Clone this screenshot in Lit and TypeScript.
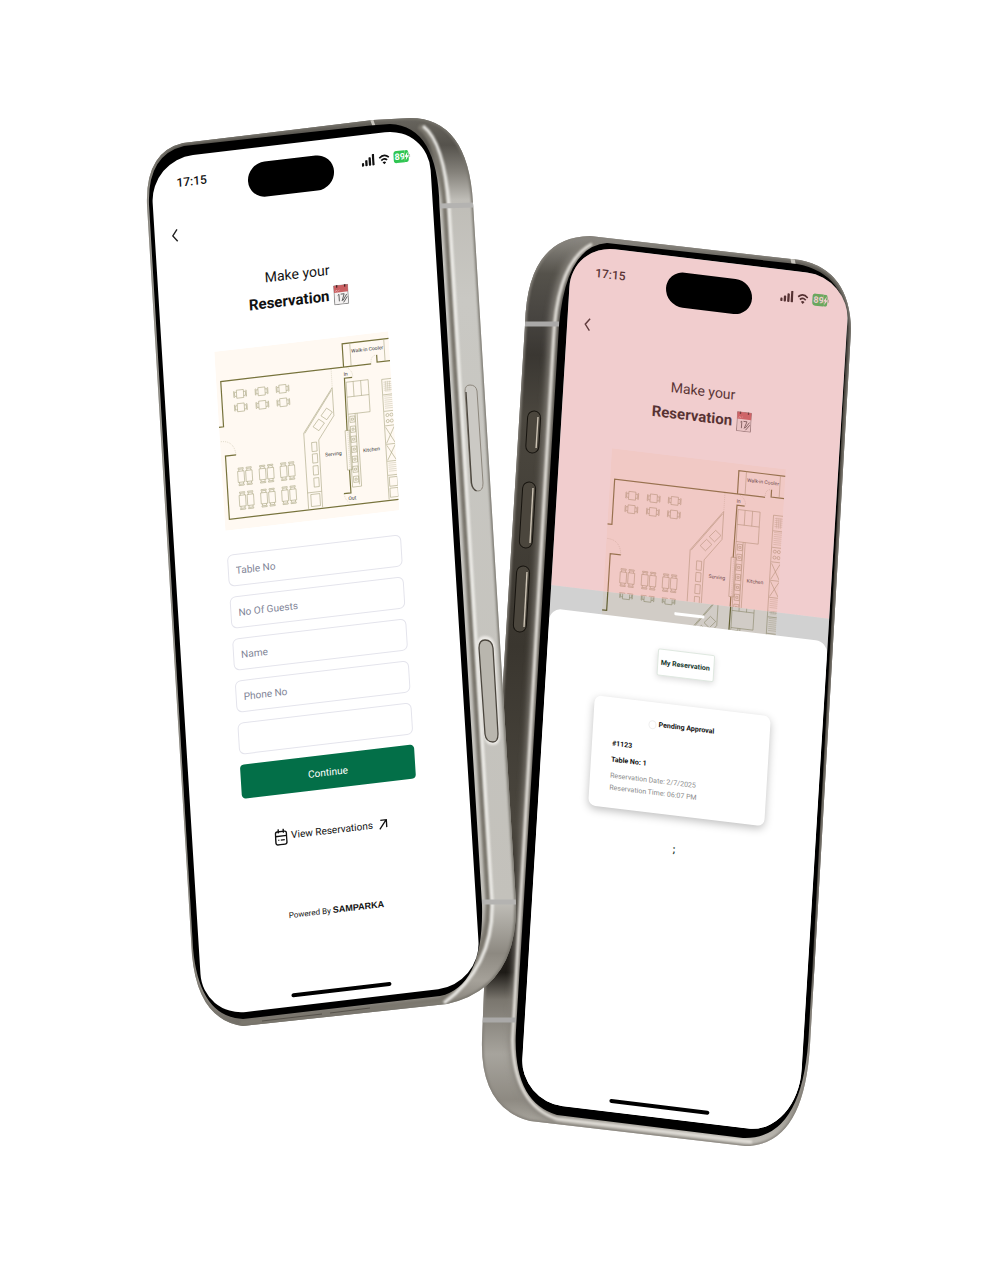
import { LitElement, html, svg, css, nothing } from "lit";
import { customElement, property } from "lit/decorators.js";

/** Restaurant floor plan, drawn on a 174 x 179 grid. */
@customElement("floor-plan")
class FloorPlan extends LitElement {
  /** Which room names to print: "all", "upper" or "none". */
  @property() labels = "all";

  static styles = css`
    :host { display: block; }
    .plan { display: block; width: 100%; height: auto; }
    .ground { fill: #fff9f2; }
    .wall { fill: none; stroke: #77733c; stroke-width: 1.2; }
    .thin { fill: none; stroke: #aaa683; stroke-width: 0.6; }
    .dotted { fill: none; stroke: #b5b195; stroke-width: 0.4; stroke-dasharray: 1 1; }
    .grate { fill: none; stroke: #bcb89c; stroke-width: 0.4; }
    .label { font: 5px "Roboto", sans-serif; fill: #333; text-anchor: middle; }
  `;

  private smallTable(x: number, y: number) {
    return svg`<g class="thin">
      <rect x=${x - 3.5} y=${y - 4} width="7" height="8"></rect>
      <path d="M${x - 3.5} ${y - 2}h-2v4h2M${x - 5.5} ${y - 3}h-.8v6h.8M${x + 3.5} ${y - 2}h2v4h-2M${x + 5.5} ${y - 3}h.8v6h-.8"></path>
    </g>`;
  }

  private longTable(x: number, y: number) {
    return svg`<g class="thin">
      <rect x=${x - 3.2} y=${y - 5.5} width="6.4" height="11"></rect>
      <path d="M${x - 2} ${y - 5.5}v-2h4v2M${x - 2.6} ${y - 7.5}v-1.2h5.2v1.2M${x - 2} ${y + 5.5}v2h4v-2M${x - 2.6} ${y + 7.5}v1.2h5.2v-1.2"></path>
    </g>`;
  }

  render() {
    const cols = [23, 44.5, 65.5];
    return html`<svg class="plan" viewBox="0 0 174 179" role="img" aria-label="Floor plan">
      <rect class="ground" width="174" height="179"></rect>
      <path class="wall" d="M0 75.5h4.6V30.3H155M127.4 30V7H174M161 22v7.3h13M15.3 104.8H4.7V168H174M135.3 41.4h-7.7L127 94M127 133v23h-7"></path>
      <path class="dotted" d="M1 90Q14 90 15.3 104.8M114.9 31v18M155 29Q155 22 161 22M130 31q6 3 6 10M120 156q1 7 5 9"></path>
      <path class="thin" d="M135 7v23M169 7v22M114.8 49.3V77.3L98.3 99.7 98 167M84 167L83.8 91.3 114.8 49.3M84.8 91.6L113.8 52"></path>
      <path class="thin" d="M84 151h14M87 153h9v12h-9z"></path>
      <path class="thin" d="M108 69l5.5 4.5-6 7-5.5-4.5zM99.5 79l5.5 4.5-6 7-5.5-4.5z"></path>
      ${[101.5, 113, 125, 137].map((y) => svg`<rect class="thin" x="91" y=${y} width="5" height="9"></rect>`)}
      <path class="thin" d="M129 45.6h22v32h-22zM129 60.5h22M136 45.6v15M143.5 45.6v15M129 77.5v73h9v-73M136 77.5v71"></path>
      ${[80, 90, 100, 110, 120, 130, 140].map((y) => svg`<path class="thin" d="M130.5 ${y}h5v6h-5zM132 ${y + 2}h2v2h-2z"></path>`)}
      <rect class="thin" x="125" y="93.6" width="5" height="39.4"></rect>
      <path class="dotted" d="M127.5 95v37"></path>
      <path class="thin" d="M174 47h-9.5v120M165 62.5h9M165 79h9M165 93.5h9M165 112h9M165 129h9M165 143h9"></path>
      <path class="grate" d="M166 50h8M166 52h8M166 54h8M166 56h8M166 58h8M168 49v11M170 49v11M172 49v11M166 64h8M166 66h8M166 68h8M166 70h8M166 72h8M166 74h8M166 76h8M166 131h8M166 133h8M166 135h8M166 137h8M166 139h8"></path>
      <path class="thin" d="M165.5 95l8.5 16M174 95l-8.5 16M165.5 113l8.5 15M174 113l-8.5 15M166 145h8v9h-8zM166 156h8v9h-8z"></path>
      ${[[168, 83], [172, 83], [168, 89], [172, 89]].map(([x, y]) => svg`<circle class="thin" cx=${x} cy=${y} r="1.5"></circle>`)}
      ${cols.map((x) => [this.smallTable(x, 44.7), this.smallTable(x, 58.2)])}
      ${cols.map((x) => [127, 151].map((y) => [this.longTable(x - 4, y), this.longTable(x + 4, y)]))}
      ${this.labels === "none" ? nothing : svg`
        <text class="label" x="152" y="17">Walk-in Cooler</text>
        <text class="label" x="129" y="39">In</text>
        <text class="label" x="112" y="117">Serving</text>
        <text class="label" x="150" y="117">Kitchen</text>`}
      ${this.labels === "all" ? svg`<text class="label" x="128" y="163">Out</text>` : nothing}
    </svg>`;
  }
}

/** Clock, signal, Wi-Fi and battery. */
@customElement("status-bar")
class StatusBar extends LitElement {
  static styles = css`
    :host { display: grid; grid-template-columns: 80px 1fr 80px; align-items: center; height: 52px; }
    .time { font: 500 12px/20px "Roboto", sans-serif; text-align: center; color: #111; }
    .icons { display: flex; align-items: center; gap: 4px; grid-column: 3; padding-left: 12px; }
    .icon { display: block; }
    .battery { display: flex; align-items: center; }
    .level { background: #30c552; color: #fff; border-radius: 3px 0 0 3px; padding-left: 1px; font: 700 9px/12px "Roboto", sans-serif; }
  `;
  render() {
    return html`<span class="time">17:15</span>
      <span class="icons">
        <svg class="icon" width="13" height="12" viewBox="0 0 13 12" fill="#111"><rect y="8" width="2.3" height="3.5" rx=".8"></rect><rect x="3.5" y="5.5" width="2.3" height="6" rx=".8"></rect><rect x="7" y="3" width="2.3" height="8.500" rx=".8"></rect><rect x="10.500" y="0" width="2.300" height="11.500" rx=".8"></rect></svg>
        <svg class="icon" width="11" height="11" viewBox="0 0 11 11" fill="none" stroke="#111" stroke-width="1.700"><path d="M.7 4.200Q5.500-.6 10.300 4.200M2.600 6.700Q5.500 3.800 8.400 6.700"></path><path d="M5.500 10.800L3.700 8.800Q5.500 7.200 7.300 8.800z" fill="#111" stroke="none"></path></svg>
        <span class="battery"><span class="level">89</span><svg class="icon" width="6" height="12" viewBox="0 0 6 12"><path d="M-1 0h3Q4 0 4 3v6q0 3-2 3H-1z" fill="#30c552"></path><path d="M3.200 1.500L-.2 6.800H1.600L.8 10.500 4.300 5.300H2.400z" fill="#fff"></path><path d="M5 4.500v3" stroke="#bbb"></path></svg></span>
      </span>`;
  }
}

/** Back button and page title shared by both screens. */
@customElement("screen-header")
class ScreenHeader extends LitElement {
  static styles = css`
    :host { display: block; color: #111; font-family: "Roboto", sans-serif; }
    .back { display: grid; place-items: center; width: 40px; height: 40px; margin-top: 6px; padding: 0; border: 0; background: none; }
    .title { margin: 19px 0 29px; text-align: center; font-size: 14px; line-height: 26px; font-weight: 400; }
    .strong { display: flex; justify-content: center; align-items: center; gap: 4px; font-size: 15px; font-weight: 700; }
  `;
  render() {
    return html`<status-bar></status-bar>
      <button class="back" aria-label="Back"><svg width="8" height="14" viewBox="0 0 8 14" fill="none" stroke="#222" stroke-width="1.400"><path d="M6.500 1L2 7l4.500 6"></path></svg></button>
      <h1 class="title">Make your
        <span class="strong">Reservation
          <svg width="15" height="20" viewBox="0 0 15 20"><rect x=".5" y=".5" width="14" height="19" fill="#f4f2f2" stroke="#777" stroke-width=".8"></rect><path d="M.5.500h14v7H.5z" fill="#c95f62"></path><path d="M3.500 0v2.500M11.500 0v2.500" stroke="#422" stroke-width="1.300"></path><path d="M2 6.500l1-1.500 1 1.500M5 6l1-1" stroke="#f2c6c6" stroke-width=".6" fill="none"></path><path d="M4 10.500l1.300-1v7M7 9.500h3.500l-2.500 7M9 16l4-6M13.500 12.500L9.500 18" fill="none" stroke="#555" stroke-width=".9"></path></svg>
        </span>
      </h1>`;
  }
}

/** Metal body and black bezel of a handset. */
@customElement("phone-body")
class PhoneBody extends LitElement {
  @property() side = "right";
  static styles = css`
    :host { display: block; }
    .body { display: block; width: 100%; height: 100%; overflow: visible; }
    .soft { filter: blur(1px); }
    .blend { filter: blur(3px); }
  `;

  private light() {
    return svg`<defs>
        <linearGradient id="metal" x1="0" y1="118" x2="0" y2="1026" gradientUnits="userSpaceOnUse">
          <stop offset="0" stop-color="#68655e"></stop><stop offset=".03" stop-color="#55524c"></stop>
          <stop offset=".06" stop-color="#85827b"></stop><stop offset=".09" stop-color="#bfbdb7"></stop>
          <stop offset=".2" stop-color="#c9c8c3"></stop><stop offset=".86" stop-color="#c3c1bb"></stop>
          <stop offset=".92" stop-color="#8d8981"></stop><stop offset=".95" stop-color="#a5a199"></stop><stop offset="1" stop-color="#6d6962"></stop>
        </linearGradient>
        <clipPath id="edge"><path d=${LIGHT_BODY}></path></clipPath>
      </defs>
      <path d=${LIGHT_BODY} fill="url(#metal)"></path>
      <g clip-path="url(#edge)" fill="none">
        <path class="soft" d=${LIGHT_BODY} stroke="#77746c" stroke-width="3"></path>
        <path class="soft" d="M419 126Q440 142 445 207L488 900Q491 960 440 1000L240 1023" stroke="#7b776e" stroke-width="5"></path>
        <path class="soft" d="M423 126Q444 142 449 207L492 900Q495 965 444 1003" stroke="#efeeea" stroke-width="3"></path>
        <path d="M440 206l34-1M482 902l36 0" stroke="#b4b3b1" stroke-width="5"></path>
        <path d="M371 118l3 8" stroke="#c8c5be" stroke-width="3"></path>
        <path d="M262 1021l60-7M330 1013l40-5" stroke="#55514a" stroke-width="1"></path>
      </g>
      <path d="M465 391q0-6 5-6 6 0 7 6l6 92q0 8-5 8-6 0-7-8z" fill="#cbc9c4" stroke="#8d877d" stroke-width="1"></path>
      <path d="M466 392l5.500 91q1 6 5 8" stroke="#4b463e" stroke-width="1.300" fill="none"></path>
      <path class="soft" d="M477 645q0-9 8-9t10 9l5 90q0 10-7 10-8 0-9-10z" fill="#eceae6"></path>
      <path d="M479 648q0-8 6-8 7 0 8 8l5 86q0 8-5 8-7 0-8-8z" fill="#b9b6ae" stroke="#4b463e" stroke-width="1.300"></path>
      <path d="M149 205Q147 155 184 146L370 125.500 390 124Q438 126 439.500 207L482 905Q484 986 440 996L243 1019Q199 1017 193 948z" fill="#000"></path>`;
  }

  private dark() {
    return svg`<defs>
        <linearGradient id="metal" x1="0" y1="237" x2="0" y2="1145" gradientUnits="userSpaceOnUse">
          <stop offset="0" stop-color="#8d8a84"></stop><stop offset=".04" stop-color="#55524b"></stop>
          <stop offset=".09" stop-color="#474440"></stop><stop offset=".13" stop-color="#3a3732"></stop><stop offset=".2" stop-color="#4b473f"></stop>
          <stop offset=".45" stop-color="#3a362f"></stop><stop offset=".65" stop-color="#4a463e"></stop>
          <stop offset=".81" stop-color="#1e1b17"></stop><stop offset=".84" stop-color="#7a766e"></stop>
          <stop offset=".9" stop-color="#a7a49d"></stop><stop offset=".95" stop-color="#8e8a82"></stop><stop offset="1" stop-color="#c3c0b9"></stop>
        </linearGradient>
        <clipPath id="edge"><path d=${DARK_BODY}></path></clipPath>
      </defs>
      <path d=${DARK_BODY} fill="url(#metal)"></path>
      <g clip-path="url(#edge)" fill="none">
        <path class="soft" d=${DARK_BODY} stroke="#85817a" stroke-width="3"></path>
        <path class="blend" d="M598 242Q556 254 553 340L514 1040Q516 1105 557 1118" stroke="#85817a" stroke-width="9"></path>
        <path class="soft" d="M592 244Q557 262 553.500 340L512.500 1040Q514 1105 557 1119L752 1142" stroke="#e4e1db" stroke-width="3"></path>
        <path d="M524 324h35M482 1020h34" stroke="#aaa9a8" stroke-width="5"></path>
        <path d="M792 256l2 10" stroke="#c8c5be" stroke-width="4"></path>
      </g>
      ${[[534, 411, 42], [529, 482, 66], [523, 566, 66]].map(
        ([x, y, h]) => svg`<rect x=${x - 6} y=${y} width="13" height=${h} rx="6.500" transform="rotate(3.500 ${x} ${y})" fill="#4b463d" stroke="#17140f" stroke-width="1"></rect>
          <path d="M${x + 4} ${y + 6}l${-h / 22} ${h - 11}" stroke="#cbc2b3" stroke-width="1.400"></path>`
      )}
      <path d="M558 342Q562 246 607 243L797 264Q850 274 847 335L809 1030Q804 1140 743 1138L557 1115Q512 1102 516 1030z" fill="#000"></path>`;
  }

  render() {
    const left = this.side === "right";
    return html`<svg class="body" aria-hidden="true">
      <g transform=${left ? "translate(-150 -160)" : "translate(-572 -244)"}>${left ? this.light() : this.dark()}</g>
    </svg>`;
  }
}

const LIGHT_BODY =
  "M147 205Q145 152 183 143L373 120 410 118Q468 118 473 203L516 903Q518 988 447 1004L243 1026Q198 1020 192 955z";
const DARK_BODY =
  "M525 325Q527 237 590 236L800 260Q850 270 851 330L810 1045Q804 1146 745 1146L530 1121Q480 1108 482 1040L484 990z";

@customElement("app-root")
class AppRoot extends LitElement {
  static styles = css`
    :host { display: block; min-height: 100vh; background: #fff; color: #111; font-family: "Roboto", sans-serif; }
    .scene { display: flex; justify-content: center; align-items: flex-start; gap: 144px; padding: 160px 0 159px 2px; overflow: hidden; }
    .phone { position: relative; flex: none; width: 278px; }
    .front { z-index: 1; }
    .rear { margin-top: 84px; }
    .casing { position: absolute; inset: 0; }
    .screen { position: relative; overflow: hidden; height: 857px; background: #fff; transform-origin: 0 0; }
    .tilt-left { transform: matrix(1, -0.118, 0.062, 1, 0, 0); border-radius: 43px; }
    .tilt-right { transform: matrix(1, 0.121, -0.061, 1, 0, 0); border-radius: 43px 43px 50px 43px / 43px 43px 66px 43px; }
    .island { position: absolute; z-index: 2; top: 15px; left: 50%; width: 86px; height: 35px; margin-left: -43px; border-radius: 18px; background: #000; }
    .content { padding: 0 52px; }
    .form { display: grid; gap: 10px; margin-top: 24px; }
    .field { box-sizing: border-box; width: 100%; height: 32px; padding: 0 7px; border: 1px solid #e4e4ec; border-radius: 6px; background: #fff; font: 10px "Roboto", sans-serif; color: #222; }
    .field::placeholder { color: #7f8597; opacity: 1; }
    .submit { height: 34px; border: 0; border-radius: 4px; background: #036f48; color: #fff; font: 10px "Roboto", sans-serif; }
    .view { display: flex; justify-content: center; align-items: center; gap: 4px; margin-top: 32px; font-size: 10px; line-height: 20px; color: #111; text-decoration: none; }
    .powered { margin: 60px 0 0; text-align: center; font-size: 8px; line-height: 20px; }
    .brand { font: 700 9px "Liberation Sans", sans-serif; }
    .home { position: absolute; bottom: 9px; left: 50%; width: 100px; height: 4px; margin-left: -50px; border-radius: 2px; background: #000; }
    .backdrop { height: 341px; overflow: hidden; }
    .rest { height: 40px; overflow: hidden; }
    .shifted { margin-top: -57px; }
    .tint { position: absolute; inset: 0 0 auto; height: 341px; background: rgba(215, 112, 115, 0.35); }
    .shade { position: absolute; top: 341px; left: 0; right: 0; height: 40px; background: rgba(0, 0, 0, 0.18); }
    .grip { position: absolute; top: 353px; left: 50%; width: 30px; height: 3px; margin-left: -15px; border-radius: 1px; background: #fff; }
    .sheet { position: absolute; inset: 364px 0 0; display: flex; flex-direction: column; align-items: center; padding: 27px 52px 0 50px; border-radius: 12px 12px 0 0; background: #fff; }
    .tab { height: 27px; padding: 0 3px; border: 1px solid #dfe8e0; border-radius: 2px; background: #fff; box-shadow: 0 2px 6px rgba(0, 0, 0, 0.14); font: 700 7px "Roboto", sans-serif; color: #16382d; }
    .card { box-sizing: border-box; align-self: stretch; height: 110px; margin-top: 27px; padding: 15px 20px; border-radius: 7px; background: #fff; box-shadow: 0 3px 8px rgba(0, 0, 0, 0.25); font-size: 7px; line-height: 12px; }
    .status { display: flex; justify-content: center; align-items: center; gap: 2px; margin: 0 0 11px; font-size: 7px; font-weight: 700; line-height: 14px; }
    .ring { width: 6px; height: 7px; border: 1px solid #eee; border-radius: 50%; }
    .line { margin: 0 0 4px; font-weight: 700; }
    .muted { margin: 0; color: #8b8b8b; }
    .mark { margin: 26px 0 0; font-size: 10px; line-height: 16px; font-weight: 700; color: #16382d; }
  `;

  render() {
    const fields = ["Table No", "No Of Guests", "Name", "Phone No", ""];
    return html`<main class="scene">
      <section class="phone front">
        <phone-body class="casing" side="right"></phone-body>
        <div class="screen tilt-left">
          <div class="island"></div>
          <screen-header></screen-header>
          <div class="content">
            <floor-plan></floor-plan>
            <form class="form">
              ${fields.map((f) => html`<input class="field" type="text" placeholder=${f} aria-label=${f || "Notes"} />`)}
              <button class="submit" type="button">Continue</button>
            </form>
            <a class="view" href="#reservations">
              <svg width="13" height="17" viewBox="0 0 13 17" fill="none" stroke="#111" stroke-width="1.400"><rect x="1" y="3" width="11" height="13" rx="2"></rect><path d="M4 .500v4M9 .500v4M1 7.500h11M3.500 11.500h1M6 11.500h4"></path></svg>
              View Reservations
              <svg width="12" height="12" viewBox="0 0 12 12" fill="none" stroke="#111" stroke-width="1.300"><path d="M3 10.500L9.500 2M4 1.500h6V9"></path></svg>
            </a>
            <p class="powered">Powered By <span class="brand">SAMPARKA</span></p>
          </div>
          <div class="home"></div>
        </div>
      </section>
      <section class="phone rear">
        <phone-body class="casing" side="left"></phone-body>
        <div class="screen tilt-right">
          <div class="island"></div>
          <div class="backdrop">
            <screen-header></screen-header>
            <div class="content"><floor-plan labels="upper"></floor-plan></div>
          </div>
          <div class="content rest"><floor-plan class="shifted" labels="none"></floor-plan></div>
          <div class="tint"></div>
          <div class="shade"></div>
          <div class="grip"></div>
          <div class="sheet">
            <button class="tab" type="button">My Reservation</button>
            <article class="card">
              <h2 class="status"><span class="ring"></span>Pending Approval</h2>
              <p class="line">#1123</p>
              <p class="line">Table No: 1</p>
              <p class="muted">Reservation Date: 2/7/2025</p>
              <p class="muted">Reservation Time: 06:07 PM</p>
            </article>
            <p class="mark">;</p>
          </div>
          <div class="home"></div>
        </div>
      </section>
    </main>`;
  }
}
